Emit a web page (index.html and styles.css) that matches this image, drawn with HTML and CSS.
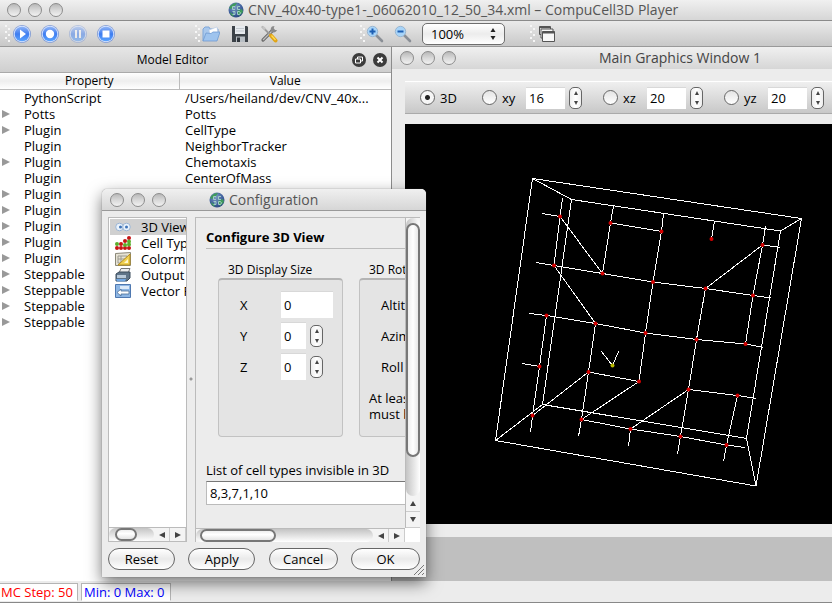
FILE: index.html
```html
<!DOCTYPE html>
<html lang="en">
<head>
<meta charset="utf-8">
<title>CompuCell3D Player</title>
<link rel="stylesheet" href="styles.css">
</head>
<body>
<svg class="defs" aria-hidden="true">
  <defs>
    <linearGradient id="blue" x1="0" y1="0" x2="0" y2="1"><stop offset="0" stop-color="#8fb4f6"/><stop offset=".5" stop-color="#3f7df0"/><stop offset="1" stop-color="#5aa5ff"/></linearGradient>
    <radialGradient id="globeFill" cx=".4" cy=".3" r=".8"><stop offset="0" stop-color="#7f9fc4"/><stop offset=".6" stop-color="#3f5f9c"/><stop offset="1" stop-color="#26427a"/></radialGradient>
    <symbol id="globe" viewBox="0 0 16 16">
      <circle cx="8" cy="8" r="7.500" fill="url(#globeFill)"/>
      <path d="M1 6Q4 1 9 1L7 4 3 7zM9 9l5-2 1 3-4 4zM2 10l3 2 1 3-3-2z" fill="#3f9a5c"/>
      <path d="M7 4.500H4.500v3H7M12 4.500H9.500v3H12M4.500 9.500H7v3H4.500M6.500 11H5M9.500 9.500h2l1 1.500-1 1.500h-2z" fill="none" stroke="#a8d4cc" stroke-width=".9"/>
    </symbol>
    <symbol id="ball" viewBox="0 0 18 18">
      <circle cx="9" cy="9" r="9" fill="#7f9ad4"/><circle cx="9" cy="9" r="8.200" fill="#d4e2ff"/><circle cx="9" cy="9" r="7.300" fill="url(#blue)"/>
    </symbol>
  </defs>
</svg>

<header class="titlebar main-title">
  <div class="lights"><i></i><i></i><i></i></div>
  <h1 class="title"><svg class="globe"><use href="#globe"/></svg>CNV_40x40-type1-_06062010_12_50_34.xml – CompuCell3D Player</h1>
</header>

<nav class="toolbar" aria-label="Main toolbar">
  <div class="tools run">
    <span class="grip"></span>
    <button class="tool" aria-label="Play"><svg viewBox="0 0 18 18"><use href="#ball"/><path d="M7 4.500l6 4.500-6 4.500z" fill="#fff"/></svg></button>
    <button class="tool" aria-label="Step"><svg viewBox="0 0 18 18"><use href="#ball"/><circle cx="9" cy="9" r="4.200" fill="#fff"/></svg></button>
    <button class="tool" aria-label="Pause" disabled><svg viewBox="0 0 18 18"><use href="#ball"/><path d="M6 5h2v8H6zM10 5h2v8h-2z" fill="#fff"/></svg></button>
    <button class="tool" aria-label="Stop"><svg viewBox="0 0 18 18"><use href="#ball"/><path d="M5.500 5.500h7v7h-7z" fill="#fff"/></svg></button>
  </div>
  <div class="tools file">
    <span class="grip"></span>
    <button class="tool" aria-label="Open"><svg viewBox="0 0 18 18"><path d="M1 16V4l2-2h4l1 2h8v3" fill="#a9c8ec" stroke="#7fa6d8"/><path d="M7 5l8-3 1 6-8 2z" fill="#fff" stroke="#b4c8e4" stroke-width=".6"/><path d="M1 16l3-8 5 .5L11 7h7l-3 9z" fill="#9fc4ee" stroke="#6f9ad2" stroke-width=".8"/></svg></button>
    <button class="tool" aria-label="Save"><svg viewBox="0 0 18 18"><path d="M1 1h15l1 1v15H1z" fill="#3c4248"/><path d="M4 1h10v8H4z" fill="#e6eaee"/><path d="M5 3.500h8M5 6h8" stroke="#c2c8ce"/><path d="M5 11.500h9V17H5z" fill="#b8bec4"/><path d="M6 12.500h3V17H6z" fill="#30363c"/></svg></button>
    <button class="tool" aria-label="Settings"><svg viewBox="0 0 18 18"><path d="M3 15L13 5" stroke="#6c6c6c" stroke-width="3.200" stroke-linecap="round"/><path d="M3 15L13 5" stroke="#c0c0c0" stroke-width="1.200"/><path d="M12 1.500c-2 2-1.500 5 0 5.500 2 .8 4 .5 5-2L14.500 5l-1-1.200L14.500 1z" fill="#8a8a8a"/><path d="M2 1.500l9 9" stroke="#9a9a9a" stroke-width="1.800"/><path d="M1 1l4 1 1 2-2 1z" fill="#c6c6c6"/><path d="M11 10.500l4.500 5" stroke="#e0a416" stroke-width="4" stroke-linecap="round"/><path d="M11.500 10.500l4 4.500" stroke="#ffdf58" stroke-width="1.200"/></svg></button>
  </div>
  <div class="tools zoom">
    <span class="grip"></span>
    <button class="tool" aria-label="Zoom in"><svg viewBox="0 0 18 18"><path d="M10 10l6 6" stroke="#8a8f96" stroke-width="2.600" stroke-linecap="round"/><circle cx="6.500" cy="6.500" r="5.200" fill="#a8d4f8" stroke="#9ab6d0"/><path d="M3.500 6.500h6M6.500 3.500v6" stroke="#1c5fb4" stroke-width="2"/></svg></button>
    <button class="tool" aria-label="Zoom out"><svg viewBox="0 0 18 18"><path d="M10 10l6 6" stroke="#8a8f96" stroke-width="2.600" stroke-linecap="round"/><circle cx="6.500" cy="6.500" r="5.200" fill="#a8d4f8" stroke="#9ab6d0"/><path d="M3.500 6.500h6" stroke="#1c5fb4" stroke-width="2"/></svg></button>
    <span class="select-wrap">
      <select class="zoom-select" aria-label="Zoom level"><option>100%</option><option>200%</option></select>
      <svg class="arrows" viewBox="0 0 8 12"><path d="M4 0l2.500 4h-5zM4 12L1.500 8h5z" fill="#222"/></svg>
    </span>
  </div>
  <div class="tools">
    <span class="grip"></span>
    <button class="tool" aria-label="Windows"><svg viewBox="0 0 18 18"><g fill="#f8f8f8" stroke="#555"><path d="M1.500 1.500h11v8h-11z"/><path d="M1.500 2.500h11" stroke-width="1.500"/><path d="M3 4h12v9H3z"/><path d="M4.500 6.500h12v10h-12z"/><path d="M4.500 7.500h12" stroke-width="2"/></g></svg></button>
  </div>
</nav>

<main class="main">
  <section class="editor">
    <div class="dock-head">
      <h2 class="dock-title">Model Editor</h2>
      <button class="dock-btn" aria-label="Float"><svg viewBox="0 0 14 14"><circle cx="7" cy="7" r="7" fill="#3c3c3c"/><path d="M5.500 6V4h5v4H8.500M3.500 6h5v4h-5z" fill="none" stroke="#fff"/></svg></button>
      <button class="dock-btn" aria-label="Close"><svg viewBox="0 0 14 14"><circle cx="7" cy="7" r="7" fill="#3c3c3c"/><path d="M4.500 4.500l5 5M9.500 4.500l-5 5" stroke="#fff" stroke-width="2"/></svg></button>
    </div>
    <table class="tree">
      <thead><tr><th class="col-prop">Property</th><th>Value</th></tr></thead>
      <tbody>
        <tr><td>PythonScript</td><td>/Users/heiland/dev/CNV_40x...</td></tr>
        <tr><td class="branch">Potts</td><td>Potts</td></tr>
        <tr><td class="branch">Plugin</td><td>CellType</td></tr>
        <tr><td>Plugin</td><td>NeighborTracker</td></tr>
        <tr><td class="branch">Plugin</td><td>Chemotaxis</td></tr>
        <tr><td>Plugin</td><td>CenterOfMass</td></tr>
        <tr><td class="branch">Plugin</td><td></td></tr>
        <tr><td class="branch">Plugin</td><td></td></tr>
        <tr><td class="branch">Plugin</td><td></td></tr>
        <tr><td class="branch">Plugin</td><td></td></tr>
        <tr><td class="branch">Plugin</td><td></td></tr>
        <tr><td class="branch">Steppable</td><td></td></tr>
        <tr><td class="branch">Steppable</td><td></td></tr>
        <tr><td class="branch">Steppable</td><td></td></tr>
        <tr><td class="branch">Steppable</td><td></td></tr>
      </tbody>
    </table>
  </section>

  <section class="workspace">
    <div class="graphics">
      <div class="titlebar sub-title">
        <div class="lights"><i></i><i></i><i></i></div>
        <h2 class="title">Main Graphics Window 1</h2>
      </div>
      <form class="view-bar">
        <label class="view first"><input type="radio" name="view" checked>3D</label>
        <div class="view"><label><input type="radio" name="view">xy</label><input class="num" type="text" value="16" aria-label="xy slice"><span class="spin"><button type="button" class="up" aria-label="Increase xy"></button><button type="button" class="down" aria-label="Decrease xy"></button></span></div>
        <div class="view"><label><input type="radio" name="view">xz</label><input class="num" type="text" value="20" aria-label="xz slice"><span class="spin"><button type="button" class="up" aria-label="Increase xz"></button><button type="button" class="down" aria-label="Decrease xz"></button></span></div>
        <div class="view"><label><input type="radio" name="view">yz</label><input class="num" type="text" value="20" aria-label="yz slice"><span class="spin"><button type="button" class="up" aria-label="Increase yz"></button><button type="button" class="down" aria-label="Decrease yz"></button></span></div>
      </form>
      <div class="scene">
        <svg viewBox="405 124 427 400" preserveAspectRatio="xMinYMin meet" role="img" aria-label="3D lattice wireframe">
          <g fill="none" stroke="#fff" shape-rendering="crispEdges">
            <path d="M532.500 178.500L801.500 218.500 756 486 495.500 440.500z"/>
            <path d="M571.500 199.500L780.500 231 746.500 438.500 542.500 404.500z"/>
            <path d="M532.500 178.500L571.500 199.500M801.500 218.500L780.500 231M756 486L746.500 438.500M495.500 440.500L542.500 404.500"/>
            <path d="M562.500 198.500L560 216.500 554 265.500M542 213.500L560 216.500 602.500 273.500"/>
            <path d="M613.500 206L610.500 223 602.500 273.500M610.500 223L661.500 231.500M663.500 213.500L661.500 231.500 653 282M714.500 221L711.500 239"/>
            <path d="M765.500 226.500L762.500 245 753 295.500 745.500 344M780.500 247.500L762.500 245 705.500 288.500"/>
            <path d="M536 262.500L554 265.500 602.500 273.500 653 282 705.500 288.500 753 295.500 770.500 298"/>
            <path d="M554 265.500L595.500 323.500M653 282L645.500 333 639 381.500 581.500 419.500M705.500 288.500L696.500 339.500 688.500 389.500 680.500 436.500 677.500 454"/>
            <path d="M529.500 313.500L546.500 315.500 595.500 323.500 645.500 333 696.500 339.500 745.500 344 763.500 347.500"/>
            <path d="M546.500 315.500L539.500 366.500 532.500 415.500 530.500 432.500M522.500 363.500L539.500 366.500"/>
            <path d="M595.500 323.500L588.500 372 581.500 419.500 578.500 436.500M532.500 415.500L588.500 372 639 381.500"/>
            <path d="M628.500 446.500L630.500 429 688.500 389.500 737.500 395.500 756 398.500M737.500 395.500L726.500 445 723.500 461.500"/>
            <path d="M581.500 419.500L630.500 429 680.500 436.500 726.500 445 745 447.500"/>
            <path d="M601.500 351.500L612.500 365.500 618.500 351.500"/>
          </g>
          <path class="cells" d="M560 216.500h0M610.500 223h0M661.500 231.500h0M711.500 239h0M762.500 245h0M554 265.500h0M602.500 273.500h0M653 282h0M705.500 288.500h0M753 295.500h0M546.500 315.500h0M595.500 323.500h0M645.500 333h0M696.500 339.500h0M745.500 344h0M539.500 366.500h0M588.500 372h0M639 381.500h0M688.500 389.500h0M737.500 395.500h0M532.500 415.500h0M581.500 419.500h0M630.500 429h0M680.500 436.500h0M726.500 445h0"/>
          <circle cx="612.500" cy="365.500" r="2" fill="#b8b800"/>
        </svg>
      </div>
    </div>
  </section>
</main>

<footer class="status">
  <output class="step">MC Step: 50</output>
  <output class="range">Min: 0 Max: 0</output>
</footer>

<section class="dialog" role="dialog" aria-labelledby="dlg-title">
  <div class="titlebar dlg-bar">
    <div class="lights"><i></i><i></i><i></i></div>
    <h2 class="title" id="dlg-title"><svg class="globe"><use href="#globe"/></svg>Configuration</h2>
  </div>
  <div class="panes">
    <div class="nav-pane">
      <ul class="nav-list">
        <li class="selected"><svg viewBox="0 0 16 14"><circle cx="4.500" cy="7" r="3.800" fill="#eaf3fc" stroke="#9db6d4"/><circle cx="11.500" cy="7" r="3.800" fill="#eaf3fc" stroke="#9db6d4"/><circle cx="5.500" cy="7" r="1.500" fill="#3f74b8"/><circle cx="11.500" cy="7" r="1.500" fill="#3f74b8"/></svg>3D View</li>
        <li><svg viewBox="0 0 16 14"><g fill="#c81414"><circle cx="2" cy="12" r="2"/><circle cx="6" cy="12" r="2"/><circle cx="10" cy="12" r="2"/><circle cx="14" cy="12" r="2"/><circle cx="6" cy="8" r="2"/><circle cx="10" cy="5" r="2"/><circle cx="14" cy="2" r="2"/></g><g fill="#5cae2c"><circle cx="2" cy="8" r="2"/><circle cx="10" cy="9" r="2"/><circle cx="14" cy="8.500" r="2"/><circle cx="14" cy="5.500" r="2"/></g></svg>Cell Type</li>
        <li><svg viewBox="0 0 16 14"><path d="M.5 1.500L15.500.5v13H.5z" fill="#e6e2d4" stroke="#8a8878"/><path d="M3 4h9v7H3zM3 7h9M6 4v7" fill="none" stroke="#9a9a90"/><path d="M3 13L15 2v11z" fill="#f0d050" stroke="#b48c1c"/><path d="M9 11l4-4v4z" fill="#fff8d0"/></svg>Colormap</li>
        <li><svg viewBox="0 0 16 14"><path d="M4 5l2-4.500h9L13 5z" fill="#eee" stroke="#777"/><path d="M1 6l3-2h11v6l-3 3H1z" fill="#5f7488" stroke="#3c4c5c"/><path d="M2 7h9v3H2z" fill="#b9c9d9"/><path d="M1 11h10l-1 2.500H2z" fill="#6fa4e0"/></svg>Output S</li>
        <li><svg viewBox="0 0 16 14"><path d="M.5.5h15v13H.5z" fill="#8db6e4" stroke="#4f78b0"/><path d="M5 2h9v3H5z" fill="#dbe9f8"/><path d="M2 8.500L6 5v2h8v3H6v2z" fill="#fff" stroke="#4a6c94" stroke-width=".8"/></svg>Vector Fi</li>
      </ul>
      <div class="hscroll"><div class="track"><div class="thumb nav-thumb"></div></div><button class="left" aria-label="Scroll left"></button><button class="right" aria-label="Scroll right"></button></div>
    </div>
    <div class="splitter"></div>
    <div class="page-pane">
      <div class="page-view">
        <form class="page">
          <h3 class="page-title">Configure 3D View</h3>
          <div class="groups">
            <section class="group size">
              <h4>3D Display Size</h4>
              <div class="box">
                <div class="field"><label for="x">X</label><input id="x" class="num wide" type="text" value="0"></div>
                <div class="field"><label for="y">Y</label><input id="y" class="num" type="text" value="0"><span class="spin"><button type="button" class="up" aria-label="Increase Y"></button><button type="button" class="down" aria-label="Decrease Y"></button></span></div>
                <div class="field"><label for="z">Z</label><input id="z" class="num" type="text" value="0"><span class="spin"><button type="button" class="up" aria-label="Increase Z"></button><button type="button" class="down" aria-label="Decrease Z"></button></span></div>
              </div>
            </section>
            <section class="group rotation">
              <h4>3D Rotation</h4>
              <div class="box">
                <div class="field">Altitude</div>
                <div class="field">Azimuth</div>
                <div class="field">Roll</div>
                <p class="note">At least<br>must be</p>
              </div>
            </section>
          </div>
          <label class="types" for="types">List of cell types invisible in 3D</label>
          <input id="types" class="types-input" type="text" value="8,3,7,1,10">
        </form>
      </div>
      <div class="vscroll"><div class="track"><div class="thumb"></div></div><button class="up" aria-label="Scroll up"></button><button class="down" aria-label="Scroll down"></button></div>
      <div class="hscroll"><div class="track"><div class="thumb page-thumb"></div></div><button class="left" aria-label="Scroll left"></button><button class="right" aria-label="Scroll right"></button></div>
      <div class="corner"></div>
    </div>
  </div>
  <div class="actions">
    <button class="pill">Reset</button>
    <button class="pill">Apply</button>
    <button class="pill">Cancel</button>
    <button class="pill">OK</button>
  </div>
  <svg class="resize" viewBox="0 0 12 12"><path d="M1 11L11 1M5 11l6-6M9 11l2-2" stroke="#777"/></svg>
</section>
</body>
</html>
```
FILE: styles.css
```css
* { box-sizing: border-box; }
body {
  margin: 0;
  min-height: 100vh;
  display: flex;
  flex-direction: column;
  position: relative;
  overflow: hidden;
  background: #ececec;
  font: 13px/16px "Open Sans", "Noto Sans", sans-serif;
  color: #000;
  border-bottom: 1px solid #888;
}
h1, h2, h3, h4, p, ul { margin: 0; padding: 0; font: inherit; }
button { border: 0; padding: 0; background: none; font: inherit; color: inherit; }
input, select { font: inherit; color: inherit; margin: 0; }
.defs { position: absolute; width: 0; height: 0; }

.titlebar {
  display: flex;
  align-items: center;
  background: linear-gradient(#f0f0f0, #d6d6d6);
  color: #555;
}
.lights { display: flex; gap: 7px; }
.lights i {
  width: 14px;
  height: 14px;
  border: 1px solid #8c8c8c;
  border-radius: 50%;
  background: linear-gradient(#b8b8b8, #d8d8d8 50%, #f2f2f2);
}
.title { display: flex; align-items: center; gap: 4px; font-size: 14px; white-space: nowrap; }
.globe { width: 16px; height: 16px; }
.main-title { height: 21px; padding-left: 7px; border-bottom: 1px solid #8a8a8a; }
.main-title .title { margin-left: 165px; }

.toolbar {
  display: grid;
  grid-template-columns: 190px 165px 170px 1fr;
  height: 26px;
  padding-left: 5px;
  background: linear-gradient(#eaeaea, #c8c8c8);
  border-bottom: 1px solid #999;
}
.tools { display: flex; align-items: center; gap: 10px; }
.tools.file { gap: 11px; }
.tools.file .grip { margin-right: -10px; }
.grip {
  width: 6px;
  height: 18px;
  margin-right: -8px;
  background:
    radial-gradient(circle at 1px 1px, #f6f6f6 1px, transparent 1px) 0 0 / 6px 6px,
    radial-gradient(circle at 1px 1px, #f6f6f6 1px, transparent 1px) 3px 3px / 6px 6px;
}
.tool { width: 18px; height: 18px; }
.tool svg { display: block; width: 18px; height: 18px; }
.tool:disabled { opacity: .5; }
.tools.zoom .grip { margin-right: -10px; }
.select-wrap { position: relative; display: flex; }
.zoom-select {
  appearance: none;
  width: 83px;
  height: 22px;
  padding: 0 8px;
  border: 1px solid #6e6e6e;
  border-radius: 5px;
  background: linear-gradient(#fff, #ececec 50%, #fff);
}
.arrows { position: absolute; right: 8px; top: 5px; width: 8px; height: 12px; }

.main { flex: 1; display: grid; grid-template-columns: minmax(0, 392px) minmax(0, 1fr); }
.editor { background: #fff; border-right: 1px solid #8c8c8c; }
.dock-head {
  display: flex;
  align-items: center;
  gap: 7px;
  height: 26px;
  padding-right: 4px;
  background: linear-gradient(#e6e6e6, #cfcfcf);
  border-bottom: 1px solid #aaa;
}
.dock-title { flex: 1; text-align: center; font-size: 12px; }
.dock-btn, .dock-btn svg { display: block; width: 14px; height: 14px; }
.tree { width: 100%; border-collapse: collapse; table-layout: fixed; }
.tree th {
  height: 16px;
  padding: 0;
  font-size: 12px;
  line-height: 15px;
  font-weight: 400;
  background: linear-gradient(#fff, #eee 50%, #fff);
  border-bottom: 1px solid #bbb;
}
.tree .col-prop { width: 179px; border-right: 1px solid #bbb; }
.tree td { height: 16px; padding: 0 0 0 6px; line-height: 16px; white-space: nowrap; }
.tree td:first-child { padding-left: 24px; }
.tree .branch::before {
  content: "";
  float: left;
  margin: 4px 0 0 -22px;
  border: 4px solid transparent;
  border-left: 8px solid #999;
  border-right: 0;
}

.workspace { background: #bfbfbf; min-width: 0; }
.graphics { background: #ececec; padding-bottom: 13px; }
.sub-title { height: 22px; padding-left: 8px; color: #444; }
.sub-title .title { margin-left: 143px; }
.view-bar {
  display: flex;
  align-items: center;
  height: 33px;
  margin: 12px 0 10px 13px;
  padding-left: 15px;
  overflow: hidden;
  background: linear-gradient(#efefef, #c8c8c8);
  border-top: 1px solid #fff;
  border-bottom: 1px solid #aaa;
}
.view { display: flex; align-items: center; flex: none; width: 121px; }
.view.first { width: 62px; }
.view label { display: flex; align-items: center; width: 44px; }
.view input[type="radio"] {
  appearance: none;
  width: 15px;
  height: 15px;
  margin-right: 5px;
  border: 1px solid #666;
  border-radius: 50%;
  background: linear-gradient(#e4e4e4, #fff);
}
.view input[type="radio"]:checked { background: radial-gradient(circle, #222 2px, #f6f6f6 3px); }
.num {
  width: 39px;
  height: 22px;
  padding: 0 3px;
  border: 0;
  border-top: 1px solid #d8d8d8;
  background: #fff;
}
.spin {
  display: flex;
  flex-direction: column;
  justify-content: space-around;
  width: 13px;
  height: 22px;
  margin-left: 4px;
  border: 1px solid #666;
  border-radius: 5px;
  background: linear-gradient(90deg, #eee, #fff 50%, #eee);
}
.up, .down, .left, .right { display: flex; align-items: center; justify-content: center; }
.up::before, .down::before, .left::before, .right::before { content: ""; border: 3px solid transparent; }
.up::before { border-bottom: 5px solid #444; border-top: 0; }
.down::before { border-top: 5px solid #444; border-bottom: 0; }
.left::before { border-right: 6px solid #444; border-left: 0; }
.right::before { border-left: 6px solid #444; border-right: 0; }
.spin .up::before { border-width: 0 2px 4px; }
.spin .down::before { border-width: 4px 2px 0; }
.scene { margin-left: 13px; height: 400px; background: #000; overflow: hidden; }
.scene svg { display: block; width: 100%; height: 100%; }
.cells { stroke: #d40000; stroke-width: 4px; stroke-linecap: round; }

.status { display: flex; gap: 3px; height: 21px; padding-top: 2px; }
.status output {
  height: 18px;
  padding: 0 4px 0 1px;
  border: 1px solid #b4b4b4;
  border-left: 0;
  border-bottom-color: #fff;
  background: #fff;
  white-space: nowrap;
}
.status .range { padding: 0 6px 0 2px; border-left: 1px solid #b4b4b4; }
.step { color: #f00; }
.range { color: #00f; }

.dialog {
  position: absolute;
  left: 102px;
  top: 189px;
  width: 324px;
  background: #ececec;
  border-radius: 5px 5px 0 0;
  box-shadow: 0 6px 16px rgba(0, 0, 0, .55), 0 0 1px #666;
}
.dlg-bar { height: 22px; padding-left: 8px; border-bottom: 1px solid #999; border-radius: 5px 5px 0 0; }
.dlg-bar .title { margin-left: 43px; }
.panes { display: grid; grid-template-columns: 79px 8px 1fr; height: 325px; margin: 6px 6px 0; }
.nav-pane {
  display: flex;
  flex-direction: column;
  justify-content: space-between;
  min-width: 0;
  border: 1px solid #bbb;
  background: #fff;
}
.nav-list { list-style: none; overflow: hidden; padding: 1px 0 0; }
.nav-list li { display: flex; align-items: center; gap: 10px; height: 16px; margin-left: 1px; padding-left: 5px; white-space: nowrap; }
.nav-list svg { flex: none; width: 16px; height: 14px; }
.nav-list .selected { background: #d0d0d0; }
.splitter { background: radial-gradient(circle at 4px 162px, #999 1px, transparent 2px); }
.page-pane {
  display: grid;
  grid-template: 1fr 14px / 1fr 15px;
  min-width: 0;
  border-top: 1px solid #bbb;
  border-left: 1px solid #bbb;
}
.page-view { overflow: hidden; min-width: 0; }
.page { width: 300px; padding: 11px 0 0 10px; }
.page-title { padding-bottom: 3px; border-bottom: 1px solid #bbb; font-weight: 700; }
.groups { display: flex; gap: 16px; padding: 13px 0 0 12px; }
.group { flex: none; width: 125px; }
.group h4 { padding-left: 10px; font-size: 12px; white-space: nowrap; }
.box {
  height: 159px;
  padding-top: 9px;
  border: 1px solid #c2c2c2;
  border-top: 2px solid #b4b4b4;
  border-radius: 4px;
  background: #e4e4e4;
}
.field { display: flex; align-items: center; height: 31px; padding-left: 21px; }
.field label { width: 41px; }
.field .num { width: 25px; height: 27px; }
.field .wide { width: 52px; }
.note { padding: 8px 0 0 9px; }
.types { display: block; margin-top: 25px; white-space: nowrap; }
.types-input {
  display: block;
  width: 100%;
  height: 24px;
  margin-top: 3px;
  padding: 0 3px;
  border: 1px solid #bbb;
  border-top-color: #777;
  background: #fff;
}
.hscroll, .vscroll { display: flex; background: #f4f4f4; }
.vscroll { flex-direction: column; border-left: 1px solid #bbb; }
.hscroll { height: 14px; border-top: 1px solid #bbb; }
.hscroll button { width: 16px; border-right: 1px solid #ccc; }
.vscroll button { height: 16px; border-bottom: 1px solid #ccc; }
.track { flex: 1; background: linear-gradient(#c4c4c4, #fff); border-radius: 8px; }
.vscroll .track { background: linear-gradient(90deg, #c4c4c4, #fff); }
.thumb {
  height: 100%;
  border: 2px solid #777;
  border-radius: 8px;
  background: linear-gradient(#eee, #fff 40%, #e4e4e4);
}
.vscroll .thumb { height: 234px; margin-top: 5px; background: linear-gradient(90deg, #eee, #fff 50%, #e8e8e8); }
.nav-thumb { width: 22px; margin-left: 6px; }
.page-thumb { width: 76px; margin-left: 4px; }
.corner { background: #fff; }
.actions { display: flex; justify-content: space-between; padding: 6px 6px 7px; }
.pill {
  width: 67px;
  height: 22px;
  border: 1px solid #666;
  border-radius: 11px;
  background: linear-gradient(#fff, #eaeaea 50%, #fff);
}
.pill:nth-child(n + 3) { width: 69px; }
.resize { position: absolute; right: 1px; bottom: 1px; width: 12px; height: 12px; }
```
